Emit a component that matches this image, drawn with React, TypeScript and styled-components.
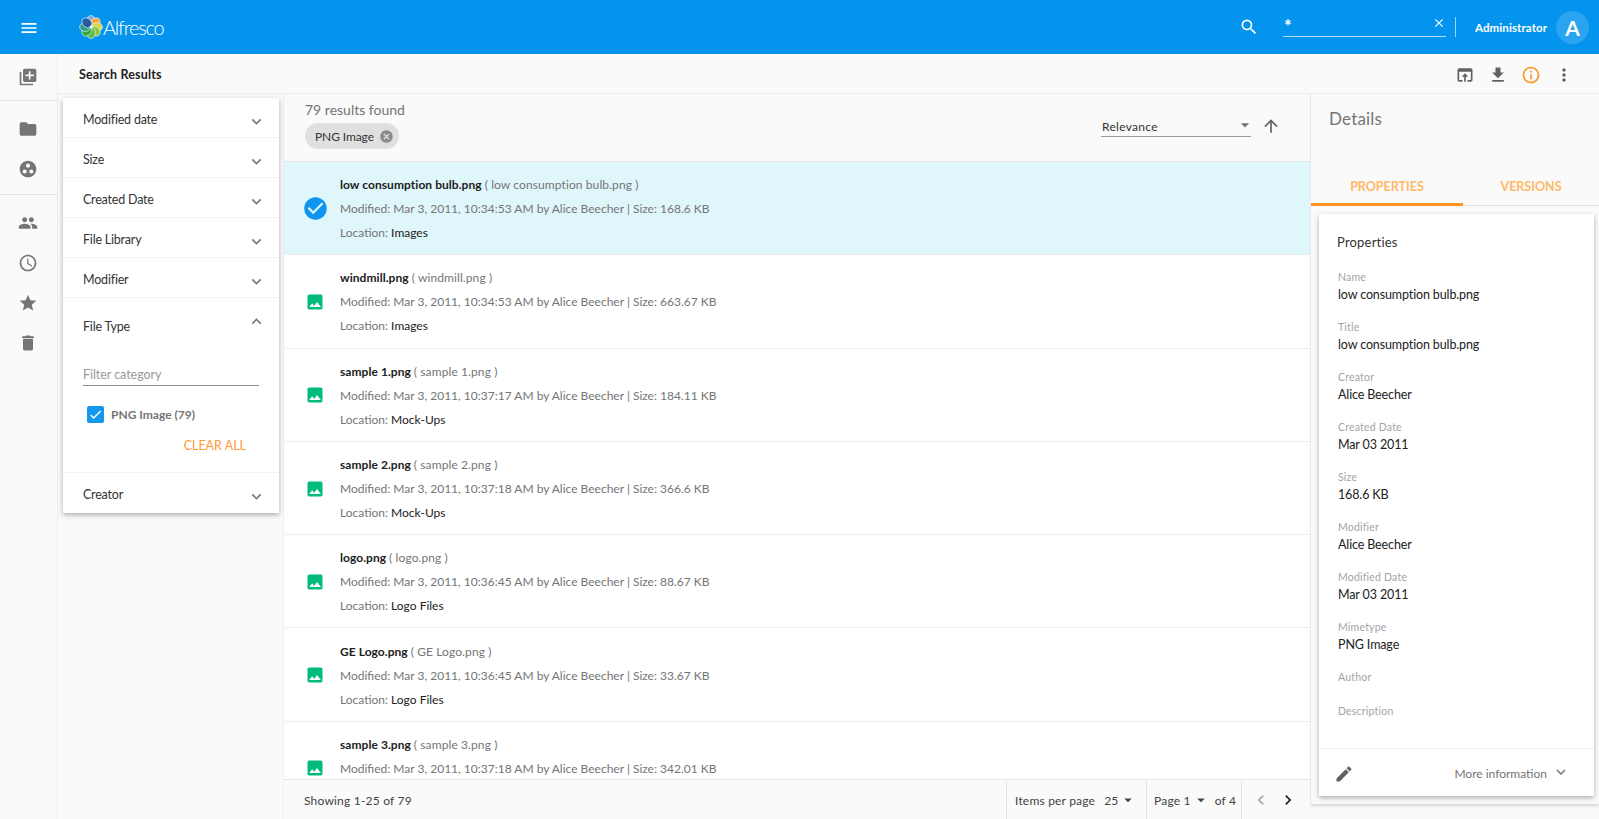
import React from 'react';
import styled, { createGlobalStyle } from 'styled-components';
import {
  MdMenu, MdLibraryAdd, MdFolder, MdGroupWork, MdPeople, MdSchedule, MdStar, MdDelete, MdSearch, MdClose,
  MdOpenInBrowser, MdFileDownload, MdInfoOutline, MdMoreVert, MdExpandMore, MdExpandLess, MdCheckCircle,
  MdImage, MdCancel, MdArrowUpward, MdArrowDropDown, MdEdit, MdChevronLeft, MdChevronRight, MdCheck,
} from 'react-icons/md';

const Global = createGlobalStyle`
  html, body { margin: 0; padding: 0; height: 100%; overflow: hidden; }
  body { font-family: "Lato", "Open Sans", sans-serif; background: #fafafa; color: #212121; }
  * { box-sizing: border-box; }
`;

const Page = styled.div`
  width: 1599px; height: 819px; display: flex; flex-direction: column; overflow: hidden;
`;

const Header = styled.header`
  height: 54px; flex: none; background: #0494ee; display: flex; align-items: center; color: #fff;
`;
const MenuButton = styled.div`
  width: 79px; padding-left: 19px; display: flex; align-items: center; font-size: 20px; height: 20px; margin-top: 2px;
`;
const Logo = styled.div`
  display: flex; align-items: center; gap: 0;
`;
const LogoText = styled.span`
  font-size: 20px; font-weight: 300; letter-spacing: -1.2px; line-height: 1; margin-top: -1px;
`;
const HeaderRight = styled.div`
  margin-left: auto; display: flex; align-items: center;
`;
const SearchIcon = styled.div`
  width: 20px; height: 20px; font-size: 20px; margin-right: 24px;
`;
const SearchField = styled.div`
  width: 163px; height: 22px; margin-top: -3px; padding: 0 3px 0 1px; border-bottom: 1px solid #b3dffb; display: flex; justify-content: space-between; font-size: 18px; font-weight: 700; line-height: 22px;
`;
const HeaderClose = styled.span`
  font-size: 14px; line-height: 14px; margin-top: 1px; margin-right: -3px;
`;
const HeaderDivider = styled.div`
  width: 1px; height: 20px; background: rgba(255,255,255,.6); margin: 0 19px 0 9px;
`;
const UserName = styled.div`
  font-size: 11.5px; font-weight: 700; letter-spacing: .1px; width: 81px;
`;
const Avatar = styled.div`
  width: 33px; height: 33px; border-radius: 50%; background: rgba(255,255,255,.15); display: flex; align-items: center; justify-content: center; font-size: 21px; font-weight: 700; margin-right: 10px;
`;

const Body = styled.div`
  flex: 1; min-height: 0; display: flex;
`;
const Nav = styled.nav`
  width: 58px; flex: none; border-right: 1px solid #eee; display: flex; flex-direction: column; background: #fafafa;
`;
const NavGroup = styled.div<{ $h: number; $pad: number; $line?: boolean }>`
  height: ${p => p.$h}px; flex: none; padding-top: ${p => p.$pad}px; display: flex; flex-direction: column; align-items: center; gap: 20px; border-bottom: ${p => p.$line ? '1px solid #e4e4e4' : 'none'};
`;
const NavIcon = styled.div`
  width: 20px; height: 20px; font-size: 20px; color: #757575; margin-right: 1px;
`;

const Main = styled.div`
  flex: 1; min-width: 0; display: flex; flex-direction: column;
`;
const Toolbar = styled.div`
  height: 40px; flex: none; border-bottom: 1px solid #ececec; display: flex; align-items: center; padding-left: 21px;
`;
const ToolbarTitle = styled.div`
  font-size: 12.5px; font-weight: 700; color: #212121; letter-spacing: .15px; margin-top: 2px;
`;
const ToolbarIcons = styled.div`
  margin-left: auto; display: flex; gap: 13px; padding-right: 25px; margin-top: 3px;
`;
const ToolIcon = styled.div<{ $accent?: boolean }>`
  width: 20px; height: 20px; font-size: 20px; color: ${p => p.$accent ? '#ff9421' : '#616161'};
`;

const Content = styled.div`
  flex: 1; min-height: 0; display: flex;
`;
const FilterColumn = styled.div`
  width: 226px; flex: none; padding: 4px 5px 0 5px; border-right: 1px solid #eee;
`;
const FilterCard = styled.div`
  background: #fff; box-shadow: 0 2px 5px rgba(0,0,0,.3); width: 216px;
`;
const FilterRow = styled.div`
  height: 40px; padding: 4px 13px 0 20px; border-bottom: 1px solid #f3f3f3; display: flex; justify-content: space-between; align-items: center; font-size: 12.5px; color: #333; letter-spacing: -.2px;
  &:last-child { border-bottom: none; padding-top: 2px; }
`;
const FilterChevron = styled.span`
  font-size: 19px; line-height: 19px; height: 19px; color: #757575; margin-top: 4px;
`;
const FilterBody = styled.div`
  border-bottom: 1px solid #f3f3f3; padding: 0 20px; height: 175px;
`;
const FilterOpenHead = styled.div`
  height: 57px; display: flex; justify-content: space-between; align-items: center; font-size: 12.5px; color: #333; letter-spacing: -.2px; margin-right: -7px;
`;
const FilterOpenChevron = styled(FilterChevron)`
  margin-top: -10px;
`;
const FilterInput = styled.div`
  margin-top: 11px; height: 20px; border-bottom: 1px solid #8c8c8c; font-size: 12.5px; color: #9a9a9a; letter-spacing: -.05px; line-height: 18px; width: 176px;
`;
const CheckRow = styled.div`
  margin-top: 20px; margin-left: 4px; display: flex; align-items: center; gap: 7px; font-size: 12px; font-weight: 700; color: #757575; letter-spacing: 0;
`;
const CheckBox = styled.div`
  width: 17px; height: 17px; background: #1597ee; border-radius: 2px; color: #fff; font-size: 15px; display: flex; align-items: center; justify-content: center;
`;
const ClearAll = styled.div`
  margin-top: 15px; width: 163px; text-align: right; font-size: 12.5px; color: #ff9a3c; letter-spacing: 0;
`;

const Results = styled.div`
  width: 1026px; flex: none; display: flex; flex-direction: column; min-height: 0;
`;
const ResultsHead = styled.div`
  height: 68px; flex: none; padding: 7px 29px 0 21px; display: flex; justify-content: space-between; border-bottom: 1px solid #e4e4e4;
`;
const ResultsSummary = styled.div`
  display: flex; flex-direction: column; align-items: flex-start;
`;
const Count = styled.div`
  font-size: 14px; color: #757575; letter-spacing: 0; line-height: 18px;
`;
const Chip = styled.div`
  margin-top: 4px; height: 26px; width: 94px; border-radius: 13px; background: #e0e0e0; display: flex; align-items: center; padding-left: 10px; gap: 5px; font-size: 12px; color: #333; letter-spacing: -.1px;
`;
const ChipClose = styled.span`
  font-size: 15px; height: 15px; line-height: 15px; color: #8a8a8a;
`;
const SortArea = styled.div`
  display: flex; align-items: flex-start; padding-top: 16px; gap: 10px;
`;
const SortSelect = styled.div`
  width: 150px; height: 20px; border-bottom: 1px solid #9a9a9a; display: flex; justify-content: space-between; align-items: center; font-size: 12px; color: #333; letter-spacing: .3px; padding: 0 0 1px 1px;
`;
const SortCaret = styled.span`
  font-size: 20px; height: 20px; color: #757575; margin-right: -4px; margin-top: -3px;
`;
const SortArrow = styled.span`
  font-size: 20px; height: 20px; color: #616161; margin-top: -1px;
`;

const RowList = styled.div`
  flex: 1; min-height: 0; overflow: hidden; background: #fff;
`;
const Row = styled.div<{ $selected?: boolean }>`
  height: 93.3px; display: flex; align-items: center; background: ${p => p.$selected ? '#dff6fb' : '#fff'}; border-bottom: 1px solid #eee;
`;
const RowIconCell = styled.div<{ $selected?: boolean }>`
  width: 56px; flex: none; padding-left: 6px; display: flex; justify-content: center; font-size: ${p => p.$selected ? 27 : 20}px; color: ${p => p.$selected ? '#0f94f0' : '#00bb7a'}; margin-top: 1px;
`;
const RowLines = styled.div`
  display: flex; flex-direction: column; font-size: 12px; line-height: 24px; letter-spacing: 0; color: #757575; padding-top: 2px;
`;
const RowName = styled.div`
  color: #212121; font-weight: 700; letter-spacing: .05px;
`;
const RowNameAlt = styled.span`
  color: #757575; font-weight: 400; letter-spacing: .1px;
`;
const Strong = styled.span`
  color: #212121;
`;
const Footer = styled.div`
  height: 40px; flex: none; border-top: 1px solid #e4e4e4; background: #fafafa; display: flex; align-items: center; padding-top: 1px; font-size: 12px; color: #424242; letter-spacing: .2px;
`;
const FooterRange = styled.div`
  width: 722px; padding-left: 20px; flex: none;
`;
const FooterCell = styled.div<{ $w: number; $pad?: number }>`
  width: ${p => p.$w}px; height: 100%; border-left: 1px solid #e4e4e4; display: flex; align-items: center; padding-left: ${p => p.$pad ?? 8}px; flex: none;
`;
const Caret = styled.span`
  font-size: 18px; height: 18px; line-height: 18px; margin-left: 1px;
`;
const Value = styled.span`
  margin-left: 9px;
`;
const OfText = styled.span`
  margin-left: 5px;
`;
const PagerIcon = styled.span<{ $off?: boolean }>`
  font-size: 20px; height: 20px; color: ${p => p.$off ? '#a8a8a8' : '#212121'}; margin-right: 7px;
`;

const Details = styled.aside`
  flex: 1; min-width: 0; height: 710px; box-shadow: 0 1px 4px rgba(0,0,0,.22); clip-path: inset(0 -6px -8px 0); background: #fafafa; border-left: 1px solid #e8e8e8; display: flex; flex-direction: column;
`;
const DetailsTitle = styled.div`
  height: 79px; flex: none; padding: 12px 0 0 18px; font-size: 17px; color: #757575; letter-spacing: .2px; line-height: 26px;
`;
const Tabs = styled.div`
  height: 33px; flex: none; display: flex; border-bottom: 1px solid #e0e0e0;
`;
const Tab = styled.div<{ $active?: boolean; $w: number }>`
  width: ${p => p.$w}px; flex: none; display: flex; align-items: flex-start; justify-content: center; padding-top: 6px; font-size: 12.5px; font-weight: 700; color: #ffb866; letter-spacing: 0; margin-bottom: -1px; border-bottom: 3px solid ${p => p.$active ? '#ff9421' : 'transparent'};
`;
const Card = styled.div`
  width: 275px; margin: 8px 0 0 8px; height: 582px; background: #fff; box-shadow: 0 2px 5px rgba(0,0,0,.3); display: flex; flex-direction: column;
`;
const CardBody = styled.div`
  flex: 1; min-height: 0; padding: 20px 19px 0;
`;
const CardTitle = styled.div`
  font-size: 13px; color: #333; line-height: 16px; letter-spacing: .2px; margin: 0 0 20px -1px;
`;
const Field = styled.div<{ $h?: number }>`
  height: ${p => p.$h ?? 50}px;
`;
const FieldLabel = styled.div`
  font-size: 10.5px; color: #a3a3a3; line-height: 15px; letter-spacing: .2px;
`;
const FieldValue = styled.div`
  font-size: 12.5px; color: #212121; line-height: 20px; letter-spacing: -.13px;
`;
const CardFooter = styled.div`
  height: 48px; flex: none; border-top: 1px solid #eee; display: flex; align-items: center; justify-content: space-between; padding: 0 24px 0 15px; color: #757575; font-size: 12px; letter-spacing: 0;
`;
const EditIcon = styled.span`
  font-size: 20px; height: 20px; color: #616161; margin-top: 2px;
`;
const More = styled.div`
  display: flex; align-items: center; gap: 5px; margin-top: 1px;
`;
const MoreChevron = styled.span`
  font-size: 18px; height: 18px; margin-top: -2px;
`;

const FlowerLogo = () => {
  const petals: [number, string][] = [
    [0, '#7fa9d8'], [45, '#f6a43a'], [90, '#d7d64a'], [135, '#8cc63f'],
    [180, '#5bb947'], [225, '#39a935'], [270, '#2f9e8f'], [315, '#255aa5'],
  ];
  return (
    <svg width="24" height="24" viewBox="0 0 24 24">
      {petals.map(([a, c]) => (
        <ellipse key={a} cx="12" cy="6.2" rx="4.4" ry="5.6" fill={c} stroke="#fff" strokeWidth=".6" transform={`rotate(${a} 12 12)`} />
      ))}
      <circle cx="12" cy="12" r="1.4" fill="#fff" />
    </svg>
  );
};

const rows = [
  ['low consumption bulb.png', 'Mar 3, 2011, 10:34:53 AM', '168.6 KB', 'Images'],
  ['windmill.png', 'Mar 3, 2011, 10:34:53 AM', '663.67 KB', 'Images'],
  ['sample 1.png', 'Mar 3, 2011, 10:37:17 AM', '184.11 KB', 'Mock-Ups'],
  ['sample 2.png', 'Mar 3, 2011, 10:37:18 AM', '366.6 KB', 'Mock-Ups'],
  ['logo.png', 'Mar 3, 2011, 10:36:45 AM', '88.67 KB', 'Logo Files'],
  ['GE Logo.png', 'Mar 3, 2011, 10:36:45 AM', '33.67 KB', 'Logo Files'],
  ['sample 3.png', 'Mar 3, 2011, 10:37:18 AM', '342.01 KB', 'Mock-Ups'],
];

const fields = [
  ['Name', 'low consumption bulb.png'], ['Title', 'low consumption bulb.png'], ['Creator', 'Alice Beecher'],
  ['Created Date', 'Mar 03 2011'], ['Size', '168.6 KB'], ['Modifier', 'Alice Beecher'],
  ['Modified Date', 'Mar 03 2011'], ['Mimetype', 'PNG Image'],
];

export default function App() {
  return (
    <Page>
      <Global />
      <Header>
        <MenuButton><MdMenu /></MenuButton>
        <Logo><FlowerLogo /><LogoText>Alfresco</LogoText></Logo>
        <HeaderRight>
          <SearchIcon><MdSearch /></SearchIcon>
          <SearchField>*<HeaderClose><MdClose /></HeaderClose></SearchField>
          <HeaderDivider />
          <UserName>Administrator</UserName>
          <Avatar>A</Avatar>
        </HeaderRight>
      </Header>
      <Body>
        <Nav>
          <NavGroup $h={47} $pad={13} $line><NavIcon><MdLibraryAdd /></NavIcon></NavGroup>
          <NavGroup $h={94} $pad={18} $line><NavIcon><MdFolder /></NavIcon><NavIcon><MdGroupWork /></NavIcon></NavGroup>
          <NavGroup $h={200} $pad={18}><NavIcon><MdPeople /></NavIcon><NavIcon><MdSchedule /></NavIcon><NavIcon><MdStar /></NavIcon><NavIcon><MdDelete /></NavIcon></NavGroup>
        </Nav>
        <Main>
          <Toolbar>
            <ToolbarTitle>Search Results</ToolbarTitle>
            <ToolbarIcons>
              <ToolIcon><MdOpenInBrowser /></ToolIcon>
              <ToolIcon><MdFileDownload /></ToolIcon>
              <ToolIcon $accent><MdInfoOutline /></ToolIcon>
              <ToolIcon><MdMoreVert /></ToolIcon>
            </ToolbarIcons>
          </Toolbar>
          <Content>
            <FilterColumn>
              <FilterCard>
                {['Modified date', 'Size', 'Created Date', 'File Library', 'Modifier'].map(t => (
                  <FilterRow key={t}>{t}<FilterChevron><MdExpandMore /></FilterChevron></FilterRow>
                ))}
                <FilterBody>
                  <FilterOpenHead>File Type<FilterOpenChevron><MdExpandLess /></FilterOpenChevron></FilterOpenHead>
                  <FilterInput>Filter category</FilterInput>
                  <CheckRow><CheckBox><MdCheck /></CheckBox>PNG Image (79)</CheckRow>
                  <ClearAll>CLEAR ALL</ClearAll>
                </FilterBody>
                <FilterRow>Creator<FilterChevron><MdExpandMore /></FilterChevron></FilterRow>
              </FilterCard>
            </FilterColumn>
            <Results>
              <ResultsHead>
                <ResultsSummary>
                  <Count>79 results found</Count>
                  <Chip>PNG Image<ChipClose><MdCancel /></ChipClose></Chip>
                </ResultsSummary>
                <SortArea>
                  <SortSelect>Relevance<SortCaret><MdArrowDropDown /></SortCaret></SortSelect>
                  <SortArrow><MdArrowUpward /></SortArrow>
                </SortArea>
              </ResultsHead>
              <RowList>
                {rows.map(([name, date, size, loc], i) => (
                  <Row key={name} $selected={i === 0}>
                    <RowIconCell $selected={i === 0}>{i === 0 ? <MdCheckCircle /> : <MdImage />}</RowIconCell>
                    <RowLines>
                      <RowName>{name} <RowNameAlt>( {name} )</RowNameAlt></RowName>
                      <div>Modified: {date} by Alice Beecher | Size: {size}</div>
                      <div>Location: <Strong>{loc}</Strong></div>
                    </RowLines>
                  </Row>
                ))}
              </RowList>
              <Footer>
                <FooterRange>Showing 1-25 of 79</FooterRange>
                <FooterCell $w={140}>Items per page<Value>25</Value><Caret><MdArrowDropDown /></Caret></FooterCell>
                <FooterCell $w={95} $pad={7}>Page 1<Caret><MdArrowDropDown /></Caret><OfText>of 4</OfText></FooterCell>
                <FooterCell $w={69} $pad={9}><PagerIcon $off><MdChevronLeft /></PagerIcon><PagerIcon><MdChevronRight /></PagerIcon></FooterCell>
              </Footer>
            </Results>
            <Details>
              <DetailsTitle>Details</DetailsTitle>
              <Tabs>
                <Tab $active $w={152}>PROPERTIES</Tab>
                <Tab $w={136}>VERSIONS</Tab>
              </Tabs>
              <Card>
                <CardBody>
                  <CardTitle>Properties</CardTitle>
                  {fields.map(([l, v]) => (
                    <Field key={l}><FieldLabel>{l}</FieldLabel><FieldValue>{v}</FieldValue></Field>
                  ))}
                  <Field $h={34}><FieldLabel>Author</FieldLabel></Field>
                  <Field $h={20}><FieldLabel>Description</FieldLabel></Field>
                </CardBody>
                <CardFooter>
                  <EditIcon><MdEdit /></EditIcon>
                  <More>More information<MoreChevron><MdExpandMore /></MoreChevron></More>
                </CardFooter>
              </Card>
            </Details>
          </Content>
        </Main>
      </Body>
    </Page>
  );
}
